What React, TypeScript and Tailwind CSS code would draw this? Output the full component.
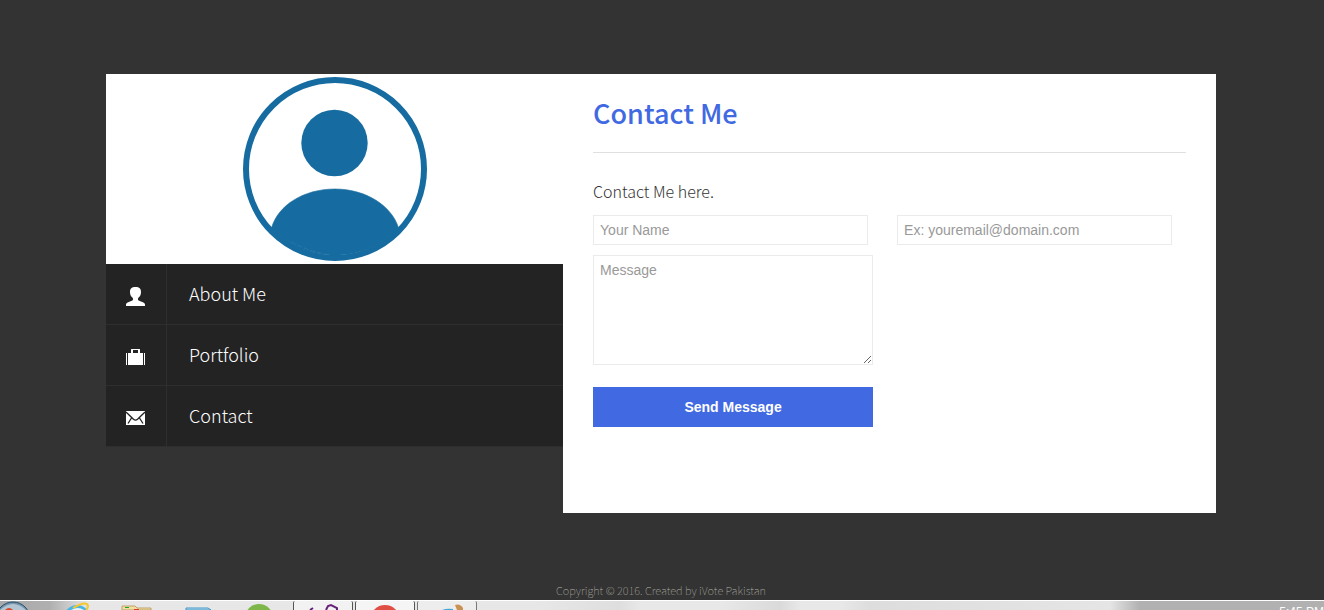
import React from 'react';

const sourceSans = "font-['Noto_Sans_CJK_JP','Noto_Sans_CJK_SC',sans-serif]";

const UserIcon = () => (
  <svg viewBox="0 0 19 19" className="size-[19px]" fill="currentColor" aria-hidden="true">
    <path d="M9.500 0C13.500 0 15 1.500 15 5c0 2.800-1 4.500-2.600 5.700-.6.600-.6 2.300.2 2.700l4.800 2c1.100.5 1.600 1.200 1.600 2.300V19H0v-1.300c0-1.100.5-1.800 1.600-2.300l4.800-2c.8-.4.8-2.100.2-2.700C5 9.500 4 7.800 4 5 4 1.500 5.500 0 9.500 0z" />
  </svg>
);

const BriefcaseIcon = () => (
  <svg viewBox="0 0 19 19" className="size-[19px]" fill="currentColor" aria-hidden="true">
    <path d="M5 5V1.500Q5 1 5.500 1h8q.5 0 .5.500V5h3v12H2V5zm2 0h5V2H7z" fillRule="evenodd" />
    <path d="M0 5h1v12H0zM18 5h1v12h-1z" />
  </svg>
);

const EnvelopeIcon = () => (
  <svg viewBox="0 0 19 19" className="size-[19px]" aria-hidden="true">
    <path d="M0 2h19v14H0z" fill="currentColor" />
    <path d="M0 3l7.500 7.300q2 1.700 4 0L19 3M5.500 9L2 14.500M13.500 9l3.500 5.500" fill="none" stroke="#232323" strokeWidth="1.300" />
  </svg>
);

const navItems = [
  { label: 'About Me', href: '#about', icon: UserIcon },
  { label: 'Portfolio', href: '#portfolio', icon: BriefcaseIcon },
  { label: 'Contact', href: '#contact', icon: EnvelopeIcon },
];

const Avatar = () => (
  <svg viewBox="0 0 184 184" className="size-[184px]" role="img" aria-label="Profile">
    <circle cx="92" cy="92" r="89" fill="#fff" stroke="#166ca0" strokeWidth="6" />
    <circle cx="91.500" cy="66" r="33.200" fill="#166ca0" />
    <path d="M28.500 151C35 128 61 112 92 112s57 17 63.500 39A87.500 87.500 0 0 1 28.500 151z" fill="#166ca0" stroke="#166ca0" strokeWidth=".6" />
    <path d="M48 165q20 10 39 13" fill="none" stroke="#317dab" strokeWidth=".6" strokeDasharray="5 2" />
  </svg>
);

const Sidebar = () => (
  <aside>
    <div className="flex h-[190px] items-center justify-center bg-white">
      <Avatar />
    </div>
    <nav>
      <ul>
        {navItems.map(({ label, href, icon: Icon }) => (
          <li key={label} className="border-b border-[#2e2e2e]">
            <a href={href} className="flex h-[60px] bg-[#232323] text-white">
              <span className="flex w-[61px] items-center border-r border-[#2e2e2e] pt-1 pl-5">
                <Icon />
              </span>
              <span className={`pl-[22px] text-[18px] leading-[58px] font-light ${sourceSans}`}>{label}</span>
            </a>
          </li>
        ))}
      </ul>
    </nav>
  </aside>
);

const fieldClass =
  "rounded-none border border-[#ebebeb] bg-white px-1.5 font-['Liberation_Sans',Arial,sans-serif] text-[14px] text-[#555] placeholder:text-[#999] outline-none focus:border-[#4169e1]";

const ContactPanel = () => (
  <main className="min-h-[439px] bg-white px-[30px] pb-10">
    <h1 className={`h-[79px] border-b border-[#e0e0e0] text-[27px] leading-[78px] font-medium text-[#4169e1] ${sourceSans}`}>
      Contact Me
    </h1>
    <p className={`pt-6 pb-2.5 text-[16px] leading-[28px] font-light text-[#333] ${sourceSans}`}>Contact Me here.</p>
    <form onSubmit={(e) => e.preventDefault()}>
      <div className="flex flex-wrap gap-x-[29px] gap-y-2.5">
        <input type="text" name="name" aria-label="Your Name" placeholder="Your Name" className={`h-[30px] w-[275px] ${fieldClass}`} />
        <input type="email" name="email" aria-label="Email" placeholder="Ex: youremail@domain.com" className={`h-[30px] w-[275px] ${fieldClass}`} />
      </div>
      <textarea name="message" aria-label="Message" placeholder="Message" className={`mt-2.5 block h-[110px] w-[280px] py-1.5 leading-4 ${fieldClass}`} />
      <button
        type="submit"
        className="mt-[22px] block h-10 w-[280px] bg-[#4169e1] font-['Liberation_Sans',Arial,sans-serif] text-[14px] font-bold text-white"
      >
        Send Message
      </button>
    </form>
  </main>
);

const Taskbar = () => (
  <div className="flex h-2.5 items-start overflow-hidden border-t border-white bg-[linear-gradient(to_right,#a9a9a9,#b0b0b0_50px,#e7e7e7_90px,#e7e7e7_540px,#dedede_620px,#e8e8e8_640px,#e8e8e8_720px,#dadada_780px,#e8e8e8_800px,#e8e8e8_840px,#dddddd_870px,#e5e5e5_1110px,#b1b1b1_1140px)]">
    {/* Start orb */}
    <div className="w-[45px] shrink-0">
      <svg viewBox="0 0 45 9" className="h-[9px] w-[45px]" aria-hidden="true">
        <circle cx="13" cy="18" r="17" fill="#7695ab" stroke="#244f70" />
        <path d="M0 9q13-12 26 0z" fill="#b4c6d3" />
        <path d="M5 9q4-4 8 0z" fill="#d84726" />
      </svg>
    </div>
    {/* Pinned applications */}
    <div className="w-[62px] shrink-0">
      <svg viewBox="0 0 62 9" className="h-[9px] w-[62px]" aria-hidden="true">
        <circle cx="32" cy="17" r="13" fill="#45b5e8" />
        <path d="M26 9q7-4 13 0z" fill="#e6f5fc" />
        <path d="M28 7Q42-1 43 5q0 2-2 4" fill="none" stroke="#f5c82f" strokeWidth="2" />
      </svg>
    </div>
    <div className="w-[62px] shrink-0">
      <svg viewBox="0 0 62 9" className="h-[9px] w-[62px]" aria-hidden="true">
        <path d="M15 9V5h13l2 2h14v2z" fill="#f4dda0" stroke="#bca36a" />
        <path d="M18 6h4v1h-4z" fill="#17a832" />
        <path d="M27 8h5v1h-5z" fill="#d93c2e" />
      </svg>
    </div>
    <div className="w-[62px] shrink-0">
      <svg viewBox="0 0 62 9" className="h-[9px] w-[62px]" aria-hidden="true">
        <path d="M17 9V7h22l3 2z" fill="#b6ddf0" stroke="#4296c5" />
      </svg>
    </div>
    <div className="w-[62px] shrink-0">
      <svg viewBox="0 0 62 9" className="h-[9px] w-[62px]" aria-hidden="true">
        <circle cx="28" cy="17" r="14" fill="#7db749" />
      </svg>
    </div>
    {/* Open windows */}
    <div className="mr-0.5 h-full w-[60px] shrink-0 rounded-t-xs border-x border-[#555] bg-[#f2f2f2]">
      <svg viewBox="0 0 58 9" className="h-[9px] w-[58px]" aria-hidden="true">
        <path d="M16 9l3-2M32 9l2-4 3-1 6 3v2" fill="none" stroke="#68217a" strokeWidth="2" />
      </svg>
    </div>
    <div className="mr-0.5 h-full w-[60px] shrink-0 rounded-t-xs border-x border-[#555] bg-[#f5f5f5]">
      <svg viewBox="0 0 58 9" className="h-[9px] w-[58px]" aria-hidden="true">
        <circle cx="29" cy="19" r="15" fill="#e04f44" />
      </svg>
    </div>
    <div className="h-full w-[60px] shrink-0 rounded-t-xs border-x border-[#777] bg-[#ededed]">
      <svg viewBox="0 0 58 9" className="h-[9px] w-[58px]" aria-hidden="true">
        <path d="M24 9q5-2 11-1v1z" fill="#45a7d4" />
        <path d="M37 4q5-2 8 3v2h-6z" fill="#c99253" />
      </svg>
    </div>
    <time className="ml-auto pt-1 font-['Liberation_Sans',Arial,sans-serif] text-[12px] leading-[14px] whitespace-nowrap text-white">
      5:45 PM
    </time>
  </div>
);

export default function App() {
  return (
    <div className="flex min-h-screen flex-col bg-[#333]">
      <div className="grow pt-[74px] pr-0.5">
        <div className="mx-auto grid max-w-[1110px] md:grid-cols-[7fr_10fr]">
          <Sidebar />
          <ContactPanel />
        </div>
      </div>
      <footer className={`pt-6 pr-0.5 pb-px text-center text-[11px] leading-[18px] font-thin text-[#b0b0a6] ${sourceSans}`}>
        Copyright © 2016. Created by iVote Pakistan
      </footer>
      <Taskbar />
    </div>
  );
}
